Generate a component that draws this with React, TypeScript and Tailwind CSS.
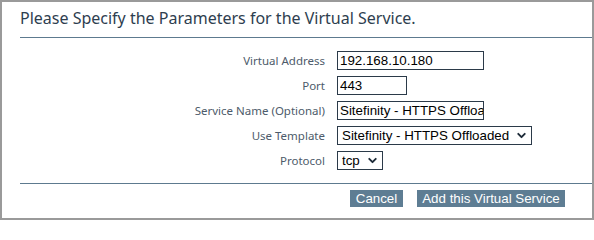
import { ChevronDown } from "lucide-react";

const label = "text-right text-[11.5px] leading-[19px] text-[#4d5b6a] [font-family:'Noto_Sans',sans-serif]";
const field =
  "block h-[19px] border border-[#2b3a49] bg-white pl-[2px] text-[13.33px] leading-[17px] text-black outline-none [font-family:'Liberation_Sans',Arial,sans-serif]";

function Select({ value, width }: { value: string; width: string }) {
  return (
    <div className={`relative h-[19px] ${width}`}>
      <select
        defaultValue={value}
        className={`${field} w-full appearance-none pl-[4px]`}
      >
        <option>{value}</option>
      </select>
      <ChevronDown
        className="pointer-events-none absolute right-[4px] top-[3px] h-[13px] w-[13px] text-[#1d2b38]"
        strokeWidth={3.5}
      />
    </div>
  );
}

export default function App() {
  return (
    <main className="w-[594px] h-[220px] border-2 border-[#9a9a9a] bg-white flex flex-col">
      {/* HEADER */}
      <div className="ml-[18px] h-[36px] border-b border-[#5d7a8f] pt-[5px]">
        <h1 className="text-[16px] leading-[22px] text-[#2e3e4f] [font-family:'Noto_Sans',sans-serif]">
          Please Specify the Parameters for the Virtual Service.
        </h1>
      </div>

      {/* FORM */}
      <div className="grid grid-cols-[323px_1fr] gap-x-[12px] gap-y-[6px] pt-[13px] items-center">
        <span className={label}>Virtual Address</span>
        <input className={`${field} w-[147px]`} defaultValue="192.168.10.180" />

        <span className={label}>Port</span>
        <input className={`${field} w-[70px]`} defaultValue="443" />

        <span className={label}>Service Name (Optional)</span>
        <input className={`${field} w-[147px]`} defaultValue="Sitefinity - HTTPS Offloaded" />

        <span className={label}>Use Template</span>
        <Select value="Sitefinity - HTTPS Offloaded" width="w-[195px]" />

        <span className={label}>Protocol</span>
        <Select value="tcp" width="w-[46px]" />
      </div>

      {/* ACTIONS */}
      <div className="ml-[18px] mt-[13px] border-t border-[#5d7a8f] pt-[6px] pr-[27px] flex justify-end gap-[14px]">
        <button className="h-[17px] w-[53px] bg-[#5e7d93] text-white text-[13.33px] leading-[17px] [font-family:'Liberation_Sans',Arial,sans-serif]">
          Cancel
        </button>
        <button className="h-[17px] w-[148px] bg-[#5e7d93] text-white text-[13.33px] leading-[17px] [font-family:'Liberation_Sans',Arial,sans-serif]">
          Add this Virtual Service
        </button>
      </div>
    </main>
  );
}
